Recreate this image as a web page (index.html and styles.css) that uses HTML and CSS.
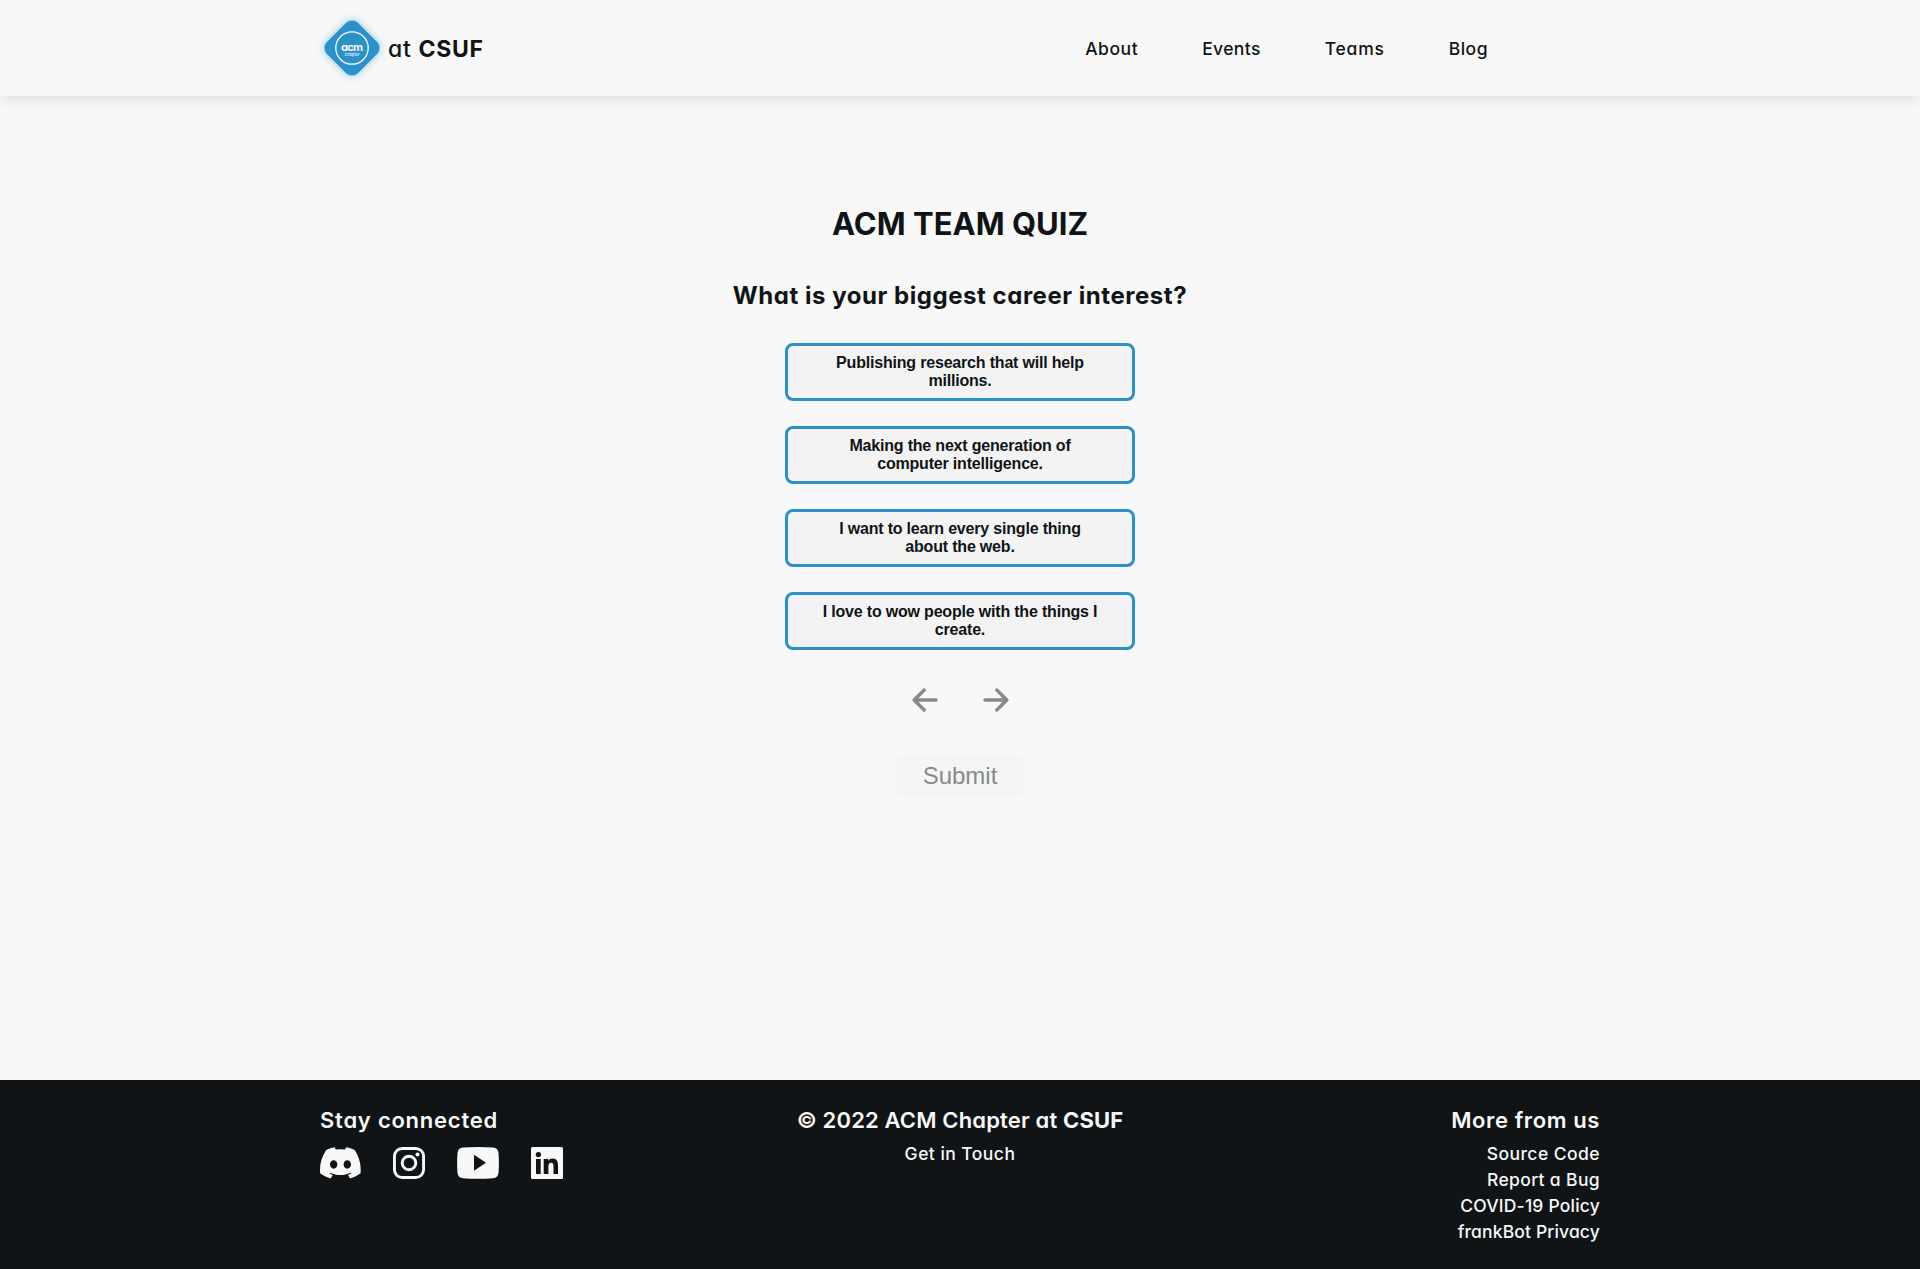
FILE: index.html
```html
<!DOCTYPE html>
<html lang="en">
<head>
<meta charset="utf-8">
<title>ACM Team Quiz</title>
<link rel="stylesheet" href="styles.css">
</head>
<body>
<header class="header">
  <div class="header-inner">
    <a class="brand">
      <svg class="logo" viewBox="0 0 64 64" width="64" height="64">
        <rect class="logo-tile" x="10" y="10" width="44" height="44" rx="8.5" transform="rotate(45 32 32)"/>
        <circle cx="32" cy="32" r="16.2" fill="none" stroke="#f8f8f8" stroke-width="1.3"/>
        <text class="logo-name" x="32" y="34.6" text-anchor="middle" textLength="22">acm</text>
        <text class="logo-sub" x="32" y="40.2" text-anchor="middle" textLength="15">Chapter</text>
      </svg>
      <span class="brand-text">at <b>CSUF</b></span>
    </a>
    <nav class="nav">
      <a class="about">About</a>
      <a class="events">Events</a>
      <a class="teams">Teams</a>
      <a class="blog">Blog</a>
    </nav>
  </div>
</header>
<main class="quiz">
  <h1 class="title">ACM TEAM QUIZ</h1>
  <h2 class="question">What is your biggest career interest?</h2>
  <div class="answers">
    <button class="answer">Publishing research that will help millions.</button>
    <button class="answer">Making the next generation of computer intelligence.</button>
    <button class="answer">I want to learn every single thing about the web.</button>
    <button class="answer">I love to wow people with the things I create.</button>
  </div>
  <div class="arrows">
    <svg viewBox="0 0 26 24" width="26" height="24"><path d="M24 12H2.5M12.2 2L2.2 12l10 10"/></svg>
    <svg viewBox="0 0 26 24" width="26" height="24"><path d="M2 12h21.5M13.8 2l10 10-10 10"/></svg>
  </div>
  <button class="submit" disabled>Submit</button>
</main>
<footer class="footer">
  <div class="footer-inner">
    <section class="col">
      <h3 class="stay">Stay connected</h3>
      <div class="social">
        <svg viewBox="0 0 71 55" width="41" height="32"><path d="M60.1 4.9A58.5 58.5 0 0 0 45.4.4c-.6 1.100-1.400 2.600-1.900 3.800a54 54 0 0 0-16.200 0C26.800 3 26 1.500 25.400.4A58.400 58.400 0 0 0 10.700 5C1.600 18.700-.9 32 .3 45.200c6.200 4.500 12.100 7.300 18 9.100 1.400-2 2.700-4 3.800-6.100-2.100-.8-4-1.700-5.900-2.900.5-.3 1-.7 1.400-1.100 11.500 5.400 24 5.400 35.400 0 .5.400 1 .8 1.400 1.100-1.900 1.100-3.800 2.100-5.900 2.900 1.100 2.100 2.300 4.200 3.700 6.100 5.900-1.800 11.800-4.600 18-9.100 1.500-15.300-2.500-28.500-10.100-40.300ZM23.700 37.300c-3.500 0-6.400-3.200-6.400-7.200s2.800-7.200 6.400-7.200 6.500 3.300 6.400 7.200c0 4-2.800 7.200-6.400 7.200Zm23.600 0c-3.500 0-6.400-3.200-6.400-7.200s2.800-7.200 6.400-7.200 6.500 3.300 6.400 7.200c0 4-2.800 7.200-6.400 7.200Z"/></svg>
        <svg viewBox="0 0 32 32" width="32" height="32"><rect x="1.450" y="1.450" width="29.100" height="29.100" rx="7.800" fill="none" stroke="#f8f8f8" stroke-width="2.900"/><circle cx="16" cy="16" r="6.800" fill="none" stroke="#f8f8f8" stroke-width="2.900"/><circle cx="24.500" cy="7.500" r="2"/></svg>
        <svg viewBox="0 0 42 32" width="42" height="32"><path fill-rule="evenodd" d="M6 .6Q21-.4 36 .6Q41 1 41.500 6Q42.300 16 41.500 26Q41 30.800 36 31.200Q21 32.200 6 31.200Q1 30.800.5 26Q-.3 16 .5 6Q1 1 6 .6ZM17 7.700v16L29 15.700Z"/></svg>
        <svg viewBox="0 0 32 32" width="32" height="32"><path fill-rule="evenodd" d="M1.500 0h29Q32 0 32 1.500v29Q32 32 30.500 32h-29Q0 32 0 30.500v-29Q0 0 1.500 0ZM5 12v15h4.700V12ZM7.400 4.900a2.700 2.700 0 1 0 0 5.400a2.700 2.700 0 1 0 0-5.400ZM12.700 12v15h4.700v-7.500c0-2 .6-3.700 2.700-3.700s2.400 1.800 2.400 3.800V27H27v-8.300c0-4-1-7.100-5.600-7.100-2.200 0-3.600 1.200-4.200 2.400V12Z"/></svg>
      </div>
    </section>
    <section class="col center">
      <h3 class="copyright">© 2022 ACM Chapter at <b>CSUF</b></h3>
      <a class="contact">Get in Touch</a>
    </section>
    <section class="col right">
      <h3 class="more">More from us</h3>
      <a class="source">Source Code</a>
      <a class="report">Report a Bug</a>
      <a class="policy">COVID-19 Policy</a>
      <a class="privacy">frankBot Privacy</a>
    </section>
  </div>
</footer>
</body>
</html>
```
FILE: styles.css
```css
* { box-sizing: border-box; }
body {
  margin: 0;
  min-height: 1269px;
  display: flex;
  flex-direction: column;
  background: #f8f8f8;
  color: #101416;
  font-family: Inter, sans-serif;
  font-feature-settings: "cv11";
}
.header { height: 96px; background: #f8f8f8; box-shadow: 0 4px 12px rgba(16, 40, 32, .11); }
.header-inner { width: 1280px; height: 100%; margin: 0 auto; display: flex; align-items: center; justify-content: space-between; }
.brand { display: flex; align-items: center; gap: 4px; }
.logo { overflow: visible; }
.logo-tile { fill: #2c91c9; filter: drop-shadow(0 0 4px rgba(44, 145, 201, .5)); }
.logo-name { font-family: Inter, sans-serif; font-size: 11px; font-weight: 700; fill: #f8f8f8; }
.logo-sub { font-family: Inter, sans-serif; font-size: 4px; font-weight: 500; fill: #f8f8f8; }
.brand-text { font-size: 23px; font-weight: 500; letter-spacing: .75px; padding-top: 1px; }
b { font-weight: 700; }
.nav { display: flex; gap: 64px; margin-right: 112px; font-size: 17.5px; font-weight: 500; }
.about { letter-spacing: .55px; }
.events { letter-spacing: .37px; }
.teams { letter-spacing: .78px; }
.blog { letter-spacing: .48px; }
.quiz { flex: 1; display: flex; flex-direction: column; align-items: center; }
.title { margin: 104px 0 0; font-size: 31px; line-height: 48px; font-weight: 700; }
.question { margin: 30px 0 0; font-size: 24px; line-height: 36px; font-weight: 700; letter-spacing: .54px; }
.answers { display: flex; flex-direction: column; gap: 25px; margin-top: 29px; }
.answer {
  width: 350px; height: 58px; padding: 8px 32px 10px;
  border: 3px solid #2c91c9; border-radius: 8px;
  background: #f3f3f3; color: #101416;
  font: 700 16px/18px "Liberation Sans", sans-serif;
  letter-spacing: -.19px;
}
.arrows { display: flex; gap: 45px; margin-top: 38px; }
.arrows svg { fill: none; stroke: #878a8b; stroke-width: 3.4; stroke-linecap: round; stroke-linejoin: round; }
.submit {
  width: 130px; height: 44px; margin-top: 42px; padding: 0;
  border: 0; border-radius: 8px; background: #f5f5f5; color: #878a8b;
  font: 24px "Liberation Sans", sans-serif;
}
.footer { height: 189px; background: #101416; color: #f8f8f8; }
.footer-inner { width: 1280px; margin: 0 auto; padding-top: 24px; display: grid; grid-template-columns: 1fr 1fr 1fr; }
.col { display: flex; flex-direction: column; align-items: flex-start; }
.center { align-items: center; }
.right { align-items: flex-end; }
.col h3 { margin: 0 0 5px; font-size: 22px; line-height: 32px; font-weight: 600; }
.col a { font-size: 17.5px; line-height: 26px; font-weight: 500; }
.col .stay { letter-spacing: .76px; }
.col .copyright { letter-spacing: .15px; }
.col .contact { letter-spacing: .45px; }
.col .more { letter-spacing: .6px; }
.col .source { letter-spacing: .44px; }
.col .report { letter-spacing: .35px; }
.col .policy { letter-spacing: .2px; }
.col .privacy { letter-spacing: .15px; }
.social { display: flex; gap: 32px; margin-top: 6px; fill: #f8f8f8; }
```
